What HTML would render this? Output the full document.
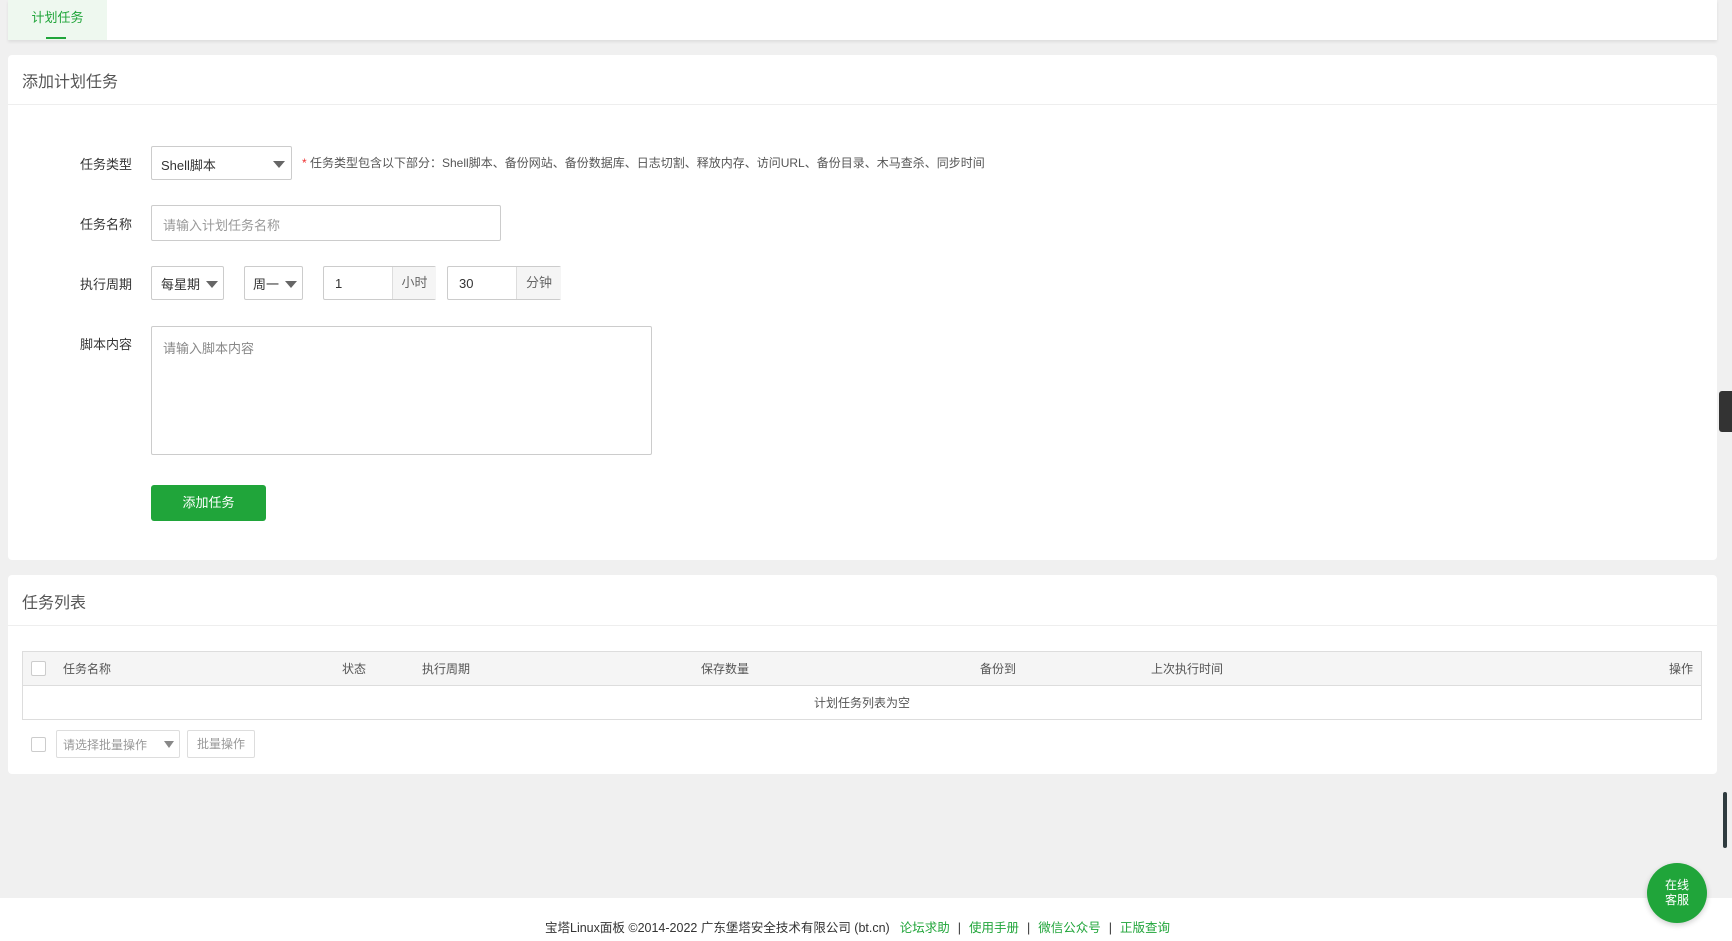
<!DOCTYPE html>
<html><head><meta charset="utf-8"><style>
*{box-sizing:border-box;margin:0;padding:0}
body{width:1732px;height:941px;background:#f0f0f0;font-family:"Liberation Sans","Noto Sans CJK SC",sans-serif;font-size:13px;color:#333;position:relative;overflow:hidden}
.a{position:absolute}
.tabbar{left:8px;top:0;width:1709px;height:40px;background:#fff;box-shadow:0 2px 3px rgba(0,0,0,.08)}
.tab{left:0;top:0;width:99px;height:40px;background:#eef8ef;color:#20a53a;text-align:center;line-height:36px;font-size:13px}
.tab i{position:absolute;left:38px;bottom:1px;width:20px;height:2px;background:#20a53a}
.panel{background:#fff;border-radius:4px}
.h{font-size:16px;color:#555}
.line{height:1px;background:#eee}
.lab{font-size:13px;color:#333}
.box{border:1px solid #ccc;background:#fff;border-radius:2px}
.arrow{position:absolute;width:0;height:0;border-left:6px solid transparent;border-right:6px solid transparent;border-top:7px solid #666}
.addon{background:#f5f5f5;border-left:1px solid #ddd;color:#666;text-align:center}
.cb{width:15px;height:15px;border:1px solid #ccc;border-radius:2px;background:#fff}
.sep{margin:0 8px;color:#333}
</style></head><body>
<div class="a tabbar"><div class="a tab">计划任务<i></i></div></div>

<div class="a panel" style="left:8px;top:55px;width:1709px;height:505px"></div>
<div class="a h" style="left:22px;top:68px">添加计划任务</div>
<div class="a line" style="left:8px;top:104px;width:1709px"></div>

<div class="a lab" style="left:80px;top:154px">任务类型</div>
<div class="a box" style="left:151px;top:146px;width:141px;height:34px"><span class="a" style="left:9px;top:8px">Shell脚本</span><span class="arrow" style="right:6px;top:14px"></span></div>
<div class="a" style="left:302px;top:154px;font-size:12px;color:#555"><span style="color:#e33">*</span> 任务类型包含以下部分：Shell脚本、备份网站、备份数据库、日志切割、释放内存、访问URL、备份目录、木马查杀、同步时间</div>

<div class="a lab" style="left:80px;top:214px">任务名称</div>
<div class="a box" style="left:151px;top:205px;width:350px;height:36px"><span class="a" style="left:11px;top:9px;color:#999">请输入计划任务名称</span></div>

<div class="a lab" style="left:80px;top:274px">执行周期</div>
<div class="a box" style="left:151px;top:266px;width:73px;height:34px"><span class="a" style="left:9px;top:7px">每星期</span><span class="arrow" style="right:5px;top:14px"></span></div>
<div class="a box" style="left:244px;top:266px;width:59px;height:34px"><span class="a" style="left:8px;top:7px">周一</span><span class="arrow" style="right:5px;top:14px"></span></div>
<div class="a box" style="left:323px;top:266px;width:113px;height:34px"><span class="a" style="left:11px;top:9px">1</span><div class="a addon" style="left:68px;top:0;width:44px;height:32px;line-height:32px">小时</div></div>
<div class="a box" style="left:447px;top:266px;width:114px;height:34px"><span class="a" style="left:11px;top:9px">30</span><div class="a addon" style="left:68px;top:0;width:45px;height:32px;line-height:32px">分钟</div></div>

<div class="a lab" style="left:80px;top:334px">脚本内容</div>
<div class="a box" style="left:151px;top:326px;width:501px;height:129px"><span class="a" style="left:11px;top:11px;color:#888">请输入脚本内容</span></div>

<div class="a" style="left:151px;top:485px;width:115px;height:36px;background:#20a53a;border-radius:3px;color:#fff;text-align:center;line-height:36px;font-size:13px">添加任务</div>

<div class="a panel" style="left:8px;top:575px;width:1709px;height:199px"></div>
<div class="a h" style="left:22px;top:589px">任务列表</div>
<div class="a line" style="left:8px;top:625px;width:1709px"></div>

<div class="a" style="left:22px;top:651px;width:1680px;height:69px;border:1px solid #ddd"></div>
<div class="a" style="left:23px;top:652px;width:1678px;height:34px;background:#f5f5f5;border-bottom:1px solid #ddd"></div>
<div class="a cb" style="left:31px;top:661px"></div>
<div class="a" style="top:660px;left:63px;font-size:12px;color:#555">任务名称</div>
<div class="a" style="top:660px;left:342px;font-size:12px;color:#555">状态</div>
<div class="a" style="top:660px;left:422px;font-size:12px;color:#555">执行周期</div>
<div class="a" style="top:660px;left:701px;font-size:12px;color:#555">保存数量</div>
<div class="a" style="top:660px;left:980px;font-size:12px;color:#555">备份到</div>
<div class="a" style="top:660px;left:1151px;font-size:12px;color:#555">上次执行时间</div>
<div class="a" style="top:660px;left:1669px;font-size:12px;color:#555">操作</div>
<div class="a" style="top:694px;left:0;width:1724px;text-align:center;font-size:12px;color:#555">计划任务列表为空</div>

<div class="a cb" style="left:31px;top:737px"></div>
<div class="a box" style="left:56px;top:730px;width:124px;height:28px;border-color:#ddd"><span class="a" style="left:6px;top:5px;font-size:12px;color:#999">请选择批量操作</span><span class="arrow" style="right:5px;top:10px;border-top-color:#888;border-left-width:5px;border-right-width:5px"></span></div>
<div class="a box" style="left:187px;top:730px;width:68px;height:28px;border-color:#ddd;text-align:center;line-height:26px;font-size:12px;color:#999">批量操作</div>

<div class="a" style="left:0;top:898px;width:1732px;height:43px;background:#fff"></div>
<div class="a" style="left:545px;top:917px;font-size:12.5px;color:#333;white-space:nowrap">宝塔Linux面板 ©2014-2022 广东堡塔安全技术有限公司 (bt.cn)<span style="margin-left:10px;color:#20a53a">论坛求助</span><span class="sep">|</span><span style="color:#20a53a">使用手册</span><span class="sep">|</span><span style="color:#20a53a">微信公众号</span><span class="sep">|</span><span style="color:#20a53a">正版查询</span></div>

<div class="a" style="left:1647px;top:863px;width:60px;height:60px;border-radius:50%;background:#20a53a;color:#fff;font-size:12px;text-align:center;line-height:15px;padding-top:15px;box-shadow:0 2px 6px rgba(0,0,0,.2)">在线<br>客服</div>
<div class="a" style="left:1719px;top:391px;width:13px;height:41px;background:#333;border-radius:3px 0 0 3px"></div>
<div class="a" style="left:1723px;top:792px;width:4px;height:56px;background:#2f3b3f;border-radius:2px"></div>
</body></html>
